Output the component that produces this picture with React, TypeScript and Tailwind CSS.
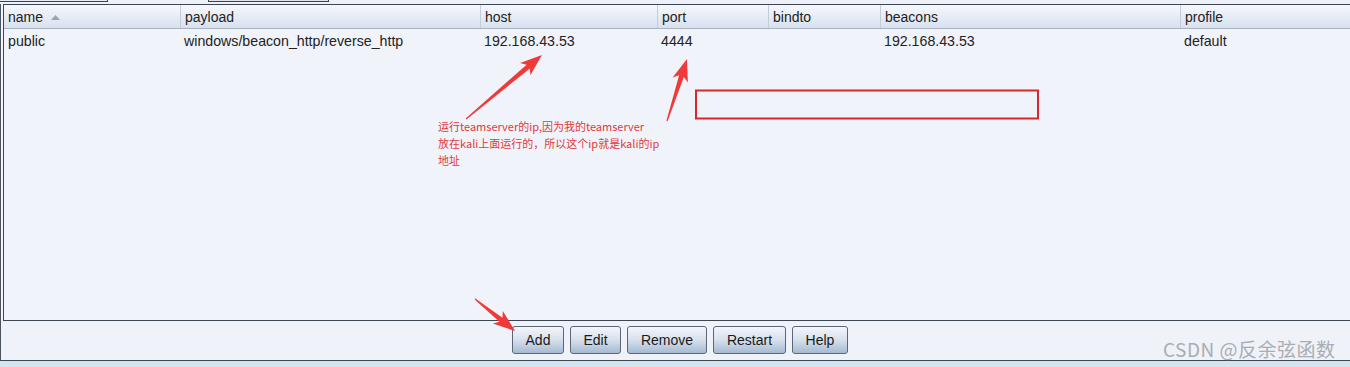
import React from "react";

const columns = [
  { key: "name", label: "name", width: 176 },
  { key: "payload", label: "payload", width: 300 },
  { key: "host", label: "host", width: 177 },
  { key: "port", label: "port", width: 111 },
  { key: "bindto", label: "bindto", width: 112 },
  { key: "beacons", label: "beacons", width: 300 },
  { key: "profile", label: "profile", width: 170 },
];

const rows = [
  {
    name: "public",
    payload: "windows/beacon_http/reverse_http",
    host: "192.168.43.53",
    port: "4444",
    bindto: "",
    beacons: "192.168.43.53",
    profile: "default",
  },
];

const buttons = [
  { label: "Add", w: "w-[52px]" },
  { label: "Edit", w: "w-[51px]" },
  { label: "Remove", w: "w-[80px]" },
  { label: "Restart", w: "w-[73px]" },
  { label: "Help", w: "w-[56px]" },
];

// arrow polygon from tail to tip, widening towards the head
function arrowPoints(x1: number, y1: number, x2: number, y2: number) {
  const dx = x2 - x1;
  const dy = y2 - y1;
  const len = Math.hypot(dx, dy);
  const ux = dx / len;
  const uy = dy / len;
  const nx = -uy;
  const ny = ux;
  const headLen = 22;
  const bx = x2 - ux * headLen;
  const by = y2 - uy * headLen;
  const pts = [
    [x1 + nx * 0.6, y1 + ny * 0.6],
    [bx + ux * 4 + nx * 2.5, by + uy * 4 + ny * 2.5],
    [bx + nx * 8, by + ny * 8],
    [x2, y2],
    [bx - nx * 8, by - ny * 8],
    [bx + ux * 4 - nx * 2.5, by + uy * 4 - ny * 2.5],
    [x1 - nx * 0.6, y1 - ny * 0.6],
  ];
  return pts.map((p) => p.join(",")).join(" ");
}

export default function App() {
  return (
    <div
      className="relative h-[367px] w-[1350px] overflow-hidden bg-[#eef1f7] text-[14px] text-[#222]"
      style={{ fontFamily: "'Liberation Sans', Arial, sans-serif" }}
    >
      {/* tab remnants */}
      <div className="flex h-[4px] items-start">
        <div className="h-[2px] w-[108px] border-b border-r border-[#3a4350] bg-[#e8edf4]" />
        <div className="h-[4px] w-[100px]" />
        <div className="h-[2px] w-[121px] border-b border-l border-r border-[#3a4350] bg-[#dfe6ef]" />
      </div>

      <div className="flex">
        <div className="w-[1px] bg-[#4a5360]" />
        <div className="w-[2px] bg-[#f3f5f9]" />
        {/* table */}
        <div className="flex h-[317px] flex-1 flex-col border-l border-t border-b border-[#3c4552] bg-[#f1f3fa]">
          <div className="flex h-[24px] border-b border-[#a8b4c2] bg-gradient-to-b from-[#f6f8fc] to-[#d7e1ef]">
            {columns.map((c, i) => (
              <div
                key={c.key}
                className={`flex items-center px-[4px] pt-[2px] text-[#222] ${i > 0 ? "border-l border-[#c3ccd8]" : ""}`}
                style={{ width: c.width }}
              >
                {c.label}
                {i === 0 && (
                  <svg width="9" height="6" viewBox="0 0 9 6" className="ml-[8px] mt-[-2px]">
                    <polygon points="0,6 4.5,1 9,6" fill="#9aa3ae" />
                  </svg>
                )}
              </div>
            ))}
          </div>
          {rows.map((r) => (
            <div key={r.name} className="flex h-[24px] items-center pt-[2px] text-[14.2px]">
              {columns.map((c) => (
                <div key={c.key} className="px-[4px]" style={{ width: c.width }}>
                  {r[c.key as keyof typeof r]}
                </div>
              ))}
            </div>
          ))}
        </div>
      </div>

      {/* button bar */}
      <div className="flex">
        <div className="w-[1px] bg-[#4a5360]" />
        <div className="flex h-[40px] flex-1 items-start justify-center gap-[6px] border-b border-[#3c4552] bg-[#eff2f8] pt-[5px] pl-[9px]">
          {buttons.map((b) => (
            <button
              key={b.label}
              className={`${b.w} h-[28px] rounded-[3px] border border-[#5d6774] bg-gradient-to-b from-[#f3f6fa] via-[#d6e0ec] to-[#a5bad2] text-[14px] text-[#1a1a1a]`}
            >
              {b.label}
            </button>
          ))}
        </div>
      </div>
      <div className="h-[6px] bg-[#d5e5ef]" />

      {/* annotations */}
      <svg className="absolute left-0 top-0" width="1350" height="367">
        <polygon points={arrowPoints(466, 119, 542, 55)} fill="#f03a3a" />
        <polygon points={arrowPoints(667, 121, 687, 59)} fill="#f03a3a" />
        <polygon points={arrowPoints(475, 299, 515, 331)} fill="#f03a3a" />
        <rect x="696" y="90.5" width="342" height="28" fill="none" stroke="#d9262b" strokeWidth="2" />
      </svg>
      <div
        className="absolute left-[438px] top-[118px] text-[11px] leading-[17px] text-[#e0393c]"
        style={{ fontFamily: "'Noto Sans CJK SC', 'Noto Sans', sans-serif" }}
      >
        <div>运行teamserver的ip,因为我的teamserver</div>
        <div>放在kali上面运行的，所以这个ip就是kali的ip</div>
        <div>地址</div>
      </div>
      <div
        className="absolute left-[1163px] top-[335px] text-[19px] tracking-[0.5px] text-[#a9adb3]"
        style={{ fontFamily: "'Noto Sans CJK SC', 'Noto Sans', sans-serif" }}
      >
        CSDN @反余弦函数
      </div>
    </div>
  );
}
